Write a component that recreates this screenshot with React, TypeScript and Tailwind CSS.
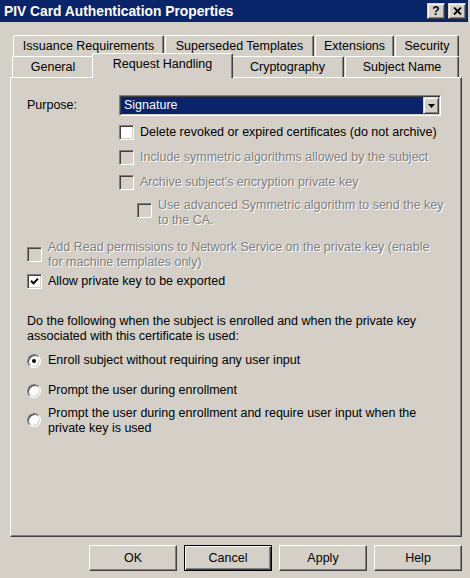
import React from "react";

const FONT = { fontFamily: '"Liberation Sans", Arial, sans-serif' };

function CheckBox({ checked = false, disabled = false, className = "" }: { checked?: boolean; disabled?: boolean; className?: string }) {
  return (
    <div
      className={`w-[15px] h-[15px] shrink-0 border border-t-[#808080] border-l-[#808080] border-r-white border-b-white shadow-[inset_1px_1px_0_#404040,inset_-1px_-1px_0_#d4d0c8] flex items-center justify-center ${disabled ? "bg-[#d4d0c8]" : "bg-white"} ${className}`}
    >
      {checked && (
        <svg width="9" height="9" viewBox="0 0 9 9">
          <path d="M1 3.8 L3.4 6.4 L8 1.6" stroke="#000" strokeWidth="2" fill="none" />
        </svg>
      )}
    </div>
  );
}

function Radio({ checked = false, className = "" }: { checked?: boolean; className?: string }) {
  return (
    <div
      className={`w-[14px] h-[14px] shrink-0 rounded-full border border-t-[#808080] border-l-[#808080] border-r-white border-b-white shadow-[inset_1px_1px_0_#404040,inset_-1px_-1px_0_#d4d0c8] bg-white flex items-center justify-center ${className}`}
    >
      {checked && <div className="w-[4px] h-[4px] rounded-full bg-black" />}
    </div>
  );
}

const disabledText = "text-[#808080] [text-shadow:1px_1px_0_#ffffff]";

function Tab({ label, className = "" }: { label: string; className?: string }) {
  return (
    <div
      className={`h-[21px] shrink-0 border-t border-l border-t-white border-l-white border-r border-r-[#404040] shadow-[inset_-1px_0_0_#808080] rounded-tl-[2px] rounded-tr-[2px] flex justify-center items-start pt-[3px] leading-[15px] whitespace-nowrap ${className}`}
    >
      {label}
    </div>
  );
}

function Button({ label, isDefault = false }: { label: string; isDefault?: boolean }) {
  if (isDefault) {
    return (
      <div className="w-[88px] h-[26px] border border-black shadow-[inset_1px_1px_0_#ffffff,inset_-1px_-1px_0_#404040,inset_-2px_-2px_0_#808080] flex items-center justify-center leading-[15px] pt-px">
        {label}
      </div>
    );
  }
  return (
    <div className="w-[88px] h-[26px] border border-t-white border-l-white border-r-[#404040] border-b-[#404040] shadow-[inset_-1px_-1px_0_#808080] flex items-center justify-center leading-[15px] pt-px">
      {label}
    </div>
  );
}

function CaptionButton({ children }: { children: React.ReactNode }) {
  return (
    <div className="w-[18px] h-[16px] bg-[#d4d0c8] border border-t-[#d4d0c8] border-l-[#d4d0c8] border-r-[#404040] border-b-[#404040] shadow-[inset_1px_1px_0_#ffffff,inset_-1px_-1px_0_#808080] flex items-center justify-center">
      {children}
    </div>
  );
}

export default function App() {
  return (
    <div
      className="w-[470px] h-[578px] overflow-hidden bg-[#d4d0c8] flex flex-col text-[12.5px] text-black"
      style={FONT}
    >
      {/* Title bar */}
      <div className="w-[468px] h-[22px] shrink-0 bg-[#0a246a] flex items-center pl-[4px] pr-[2px]">
        <span className="text-white font-bold text-[13.8px] leading-[16px] whitespace-nowrap pt-[2px]">
          PIV Card Authentication Properties
        </span>
        <div className="ml-auto flex items-center gap-[3px]">
          <CaptionButton>
            <span className="font-bold text-[12px] leading-[12px] text-black">?</span>
          </CaptionButton>
          <CaptionButton>
            <svg width="9" height="8" viewBox="0 0 9 8">
              <path d="M1 0.5 L8 7.5 M8 0.5 L1 7.5" stroke="#000" strokeWidth="1.8" />
            </svg>
          </CaptionButton>
        </div>
      </div>

      {/* Tabs row 1 */}
      <div className="mt-[13px] h-[21px] flex pl-[13px] gap-px">
        <Tab label="Issuance Requirements" className="w-[151px]" />
        <Tab label="Superseded Templates" className="w-[149px]" />
        <Tab label="Extensions" className="w-[79px]" />
        <Tab label="Security" className="w-[64px]" />
      </div>

      {/* Tabs row 2 */}
      <div className="h-[21px] flex items-start pl-[12px]">
        <Tab label="General" className="w-[82px]" />
        <div className="relative z-10 -mx-[2px] -mt-[3px] w-[141px] h-[25px] shrink-0 bg-[#d4d0c8] border-t border-l border-t-white border-l-white border-r border-r-[#404040] shadow-[inset_-1px_0_0_#808080] rounded-tl-[2px] rounded-tr-[2px] flex justify-center items-start pt-[3px] leading-[15px] whitespace-nowrap">
          Request Handling
        </div>
        <Tab label="Cryptography" className="w-[113px]" />
        <Tab label="Subject Name" className="w-[114px] ml-px" />
      </div>

      {/* Panel */}
      <div className="ml-[10px] w-[452px] h-[460px] shrink-0 border border-t-white border-l-white border-r-[#404040] border-b-[#404040] shadow-[inset_-1px_-1px_0_#808080] pt-[17px] pl-[16px] flex flex-col leading-[15px]">
        {/* Purpose */}
        <div className="flex items-center h-[21px]">
          <span className="w-[92px] shrink-0">Purpose:</span>
          <div className="w-[322px] h-[21px] border border-t-[#808080] border-l-[#808080] border-r-white border-b-white shadow-[inset_1px_1px_0_#404040,inset_-1px_-1px_0_#d4d0c8] p-[1px] flex bg-white">
            <div className="flex-1 bg-[#0a246a] text-white flex items-center pl-[3px]">Signature</div>
            <div className="w-[16px] h-[17px] bg-[#d4d0c8] border border-t-[#d4d0c8] border-l-[#d4d0c8] border-r-[#404040] border-b-[#404040] shadow-[inset_1px_1px_0_#ffffff,inset_-1px_-1px_0_#808080] flex items-center justify-center">
              <svg width="7" height="4" viewBox="0 0 7 4">
                <path d="M0 0 H7 L3.5 4 Z" fill="#000" />
              </svg>
            </div>
          </div>
        </div>

        <div className="mt-[9px] ml-[92px] flex items-center gap-[6px] h-[15px]">
          <CheckBox />
          <span className="whitespace-nowrap">Delete revoked or expired certificates (do not archive)</span>
        </div>

        <div className="mt-[10px] ml-[92px] flex items-center gap-[6px] h-[15px]">
          <CheckBox disabled />
          <span className={`whitespace-nowrap ${disabledText}`}>Include symmetric algorithms allowed by the subject</span>
        </div>

        <div className="mt-[10px] ml-[92px] flex items-center gap-[6px] h-[15px]">
          <CheckBox disabled />
          <span className={`whitespace-nowrap ${disabledText}`}>Archive subject's encryption private key</span>
        </div>

        <div className="mt-[8px] ml-[110px] flex items-start gap-[6px]">
          <CheckBox disabled className="mt-[5px]" />
          <span className={`whitespace-nowrap ${disabledText}`}>
            Use advanced Symmetric algorithm to send the key
            <br />
            to the CA.
          </span>
        </div>

        <div className="mt-[12px] flex items-start gap-[6px]">
          <CheckBox disabled className="mt-[7px]" />
          <span className={`whitespace-nowrap ${disabledText}`}>
            Add Read permissions to Network Service on the private key (enable
            <br />
            for machine templates only)
          </span>
        </div>

        <div className="mt-[4px] flex items-center gap-[6px] h-[15px]">
          <CheckBox checked />
          <span className="whitespace-nowrap">Allow private key to be exported</span>
        </div>

        <p className="mt-[25px] whitespace-nowrap">
          Do the following when the subject is enrolled and when the private key
          <br />
          associated with this certificate is used:
        </p>

        <div className="mt-[9px] flex items-center gap-[7px] h-[15px]">
          <Radio checked />
          <span className="whitespace-nowrap">Enroll subject without requiring any user input</span>
        </div>

        <div className="mt-[15px] flex items-center gap-[7px] h-[15px]">
          <Radio />
          <span className="whitespace-nowrap">Prompt the user during enrollment</span>
        </div>

        <div className="mt-[8px] flex items-start gap-[7px]">
          <Radio className="mt-[7px]" />
          <span className="whitespace-nowrap">
            Prompt the user during enrollment and require user input when the
            <br />
            private key is used
          </span>
        </div>
      </div>

      {/* Buttons */}
      <div className="mt-[8px] flex justify-end gap-[7px] pr-[8px]">
        <Button label="OK" />
        <Button label="Cancel" isDefault />
        <Button label="Apply" />
        <Button label="Help" />
      </div>
    </div>
  );
}
